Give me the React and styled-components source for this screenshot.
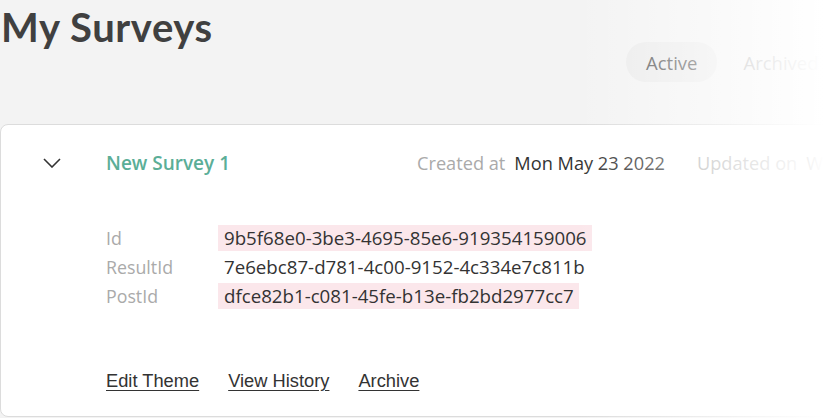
import styled, { createGlobalStyle } from "styled-components";

const GlobalStyle = createGlobalStyle`
  html, body {
    margin: 0;
    padding: 0;
    background: #f3f3f3;
    overflow: hidden;
  }
  body {
    font-family: "Open Sans", "Liberation Sans", sans-serif;
  }
`;

const Page = styled.div`
  position: relative;
  width: 824px;
  height: 418px;
  overflow: hidden;
  background: #f3f3f3;
`;

const Fade = styled.div`
  position: absolute;
  inset: 0;
  pointer-events: none;
  background: linear-gradient(
    to right,
    rgba(255, 255, 255, 0) 70%,
    rgba(255, 255, 255, 0.8) 94%,
    #fff 100%
  );
`;

const Header = styled.div`
  display: flex;
  flex-direction: column;
  padding: 0 0 0 1px;
  height: 124px;
  box-sizing: border-box;
`;

const Title = styled.h1`
  margin: 0;
  padding-top: 3px;
  font-family: "Lato", "Open Sans", sans-serif;
  font-weight: 700;
  font-size: 40px;
  line-height: 48px;
  color: #404040;
  letter-spacing: 0.6px;
`;

const Tabs = styled.div`
  display: flex;
  gap: 6px;
  margin-left: 625px;
  margin-top: -9px;
`;

const Tab = styled.div`
  height: 40px;
  padding: 0 20px;
  border-radius: 20px;
  display: flex;
  align-items: center;
  white-space: nowrap;
  font-size: 18.5px;
  color: ${({ active }) => (active ? "#555" : "#aaa")};
  background: ${({ active }) => (active ? "#ebebeb" : "transparent")};
`;

const Card = styled.div`
  flex-shrink: 0;
  width: 1000px;
  height: 293px;
  background: #fff;
  border: 1px solid #dcdcdc;
  border-radius: 8px;
  box-sizing: border-box;
  display: flex;
  flex-direction: column;
`;

const CardHead = styled.div`
  display: flex;
  align-items: center;
  height: 76px;
  white-space: nowrap;
`;

const Chevron = styled.div`
  flex-shrink: 0;
  width: 105px;
  padding-left: 42px;
  box-sizing: border-box;
  display: flex;
`;

const SurveyName = styled.div`
  flex-shrink: 0;
  width: 311px;
  font-size: 19px;
  font-weight: 600;
  color: #5bae97;
`;

const Meta = styled.span`
  flex-shrink: 0;
  font-size: 18.2px;
  color: ${({ dim }) => (dim ? "#aaa" : "#333")};
  margin-right: ${({ gap }) => gap || 0}px;
`;

const Details = styled.div`
  display: grid;
  grid-template-columns: 112px auto;
  row-gap: 1px;
  margin-top: 23px;
  padding-left: 105px;
  justify-content: start;
  align-items: center;
`;

const Label = styled.div`
  font-size: 17.8px;
  line-height: 28px;
  color: #aaa;
`;

const Value = styled.div`
  justify-self: start;
  font-size: 18.7px;
  line-height: 26px;
  padding: 0 5px 0 6px;
  color: #333;
  white-space: nowrap;
  background: ${({ mark }) => (mark ? "#fbe7eb" : "transparent")};
`;

const Actions = styled.div`
  display: flex;
  gap: 29px;
  padding-left: 105px;
  margin-top: 60px;
`;

const ActionLink = styled.a`
  font-family: "Liberation Sans", Arial, sans-serif;
  font-size: 18.3px;
  color: #333;
  text-decoration: underline;
  text-underline-offset: 3px;
  cursor: pointer;
`;

const rows = [
  { label: "Id", value: "9b5f68e0-3be3-4695-85e6-919354159006", mark: true },
  { label: "ResultId", value: "7e6ebc87-d781-4c00-9152-4c334e7c811b" },
  { label: "PostId", value: "dfce82b1-c081-45fe-b13e-fb2bd2977cc7", mark: true },
];

export default function App() {
  return (
    <Page>
      <GlobalStyle />
      <Header>
        <Title>My Surveys</Title>
        <Tabs>
          <Tab active>Active</Tab>
          <Tab>Archived</Tab>
        </Tabs>
      </Header>
      <Card>
        <CardHead>
          <Chevron>
            <svg width="18" height="10" viewBox="0 0 18 10" fill="none">
              <path d="M1 1l8 8 8-8" stroke="#333" strokeWidth="1.6" />
            </svg>
          </Chevron>
          <SurveyName>New Survey 1</SurveyName>
          <Meta dim gap={9}>Created at</Meta>
          <Meta gap={32}>Mon May 23 2022</Meta>
          <Meta dim gap={9}>Updated on</Meta>
          <Meta>Wed May 25 2022</Meta>
        </CardHead>
        <Details>
          {rows.map((r) => [
            <Label key={r.label}>{r.label}</Label>,
            <Value key={r.value} mark={r.mark}>{r.value}</Value>,
          ])}
        </Details>
        <Actions>
          <ActionLink>Edit Theme</ActionLink>
          <ActionLink>View History</ActionLink>
          <ActionLink>Archive</ActionLink>
        </Actions>
      </Card>
      <Fade />
    </Page>
  );
}
